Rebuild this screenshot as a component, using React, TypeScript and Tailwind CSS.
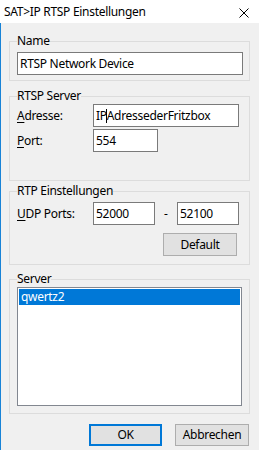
import React from "react";

function Field({ w, children, className = "" }: { w: string; children?: React.ReactNode; className?: string }) {
  return (
    <div className={`${w} h-[23px] bg-white border border-[#7a7a7a] flex items-center pl-[2px] whitespace-nowrap overflow-hidden ${className}`}>
      {children}
    </div>
  );
}

export default function App() {
  return (
    <div className="w-[259px] h-[450px] bg-[#f0f0f0] flex flex-col text-[12px] leading-[16px] tracking-[-0.3px] text-black font-['Segoe_UI','Noto_Sans',sans-serif]">
      <div className="h-[23px] bg-white flex items-center justify-between pl-[4px] pr-[10px]">
        <span>SAT&gt;IP RTSP Einstellungen</span>
        <svg width="10" height="10" viewBox="0 0 10 10" className="mt-[2px]">
          <path d="M0.5 0.5 L9.5 9.5 M9.5 0.5 L0.5 9.5" stroke="#000" strokeWidth="1" fill="none" />
        </svg>
      </div>
      <div className="flex-1 border-l border-[#1883d7] flex flex-col pl-[8px] pr-[9px]">
        <fieldset className="mt-[10px] border border-[#dcdcdc] pl-[7px] pr-[6px] pt-[3px] pb-[5px] m-0">
          <legend className="p-0">Name</legend>
          <Field w="w-[226px]">RTSP Network Device</Field>
        </fieldset>

        <fieldset className="mt-[7px] border border-[#dcdcdc] pl-[7px] pr-[6px] pt-0 pb-[28px]">
          <legend className="p-0">RTSP Server</legend>
          <div className="flex items-center h-[23px]">
            <span className="w-[76px]"><u className="underline-offset-[2px]">A</u>dresse:</span>
            <Field w="w-[146px]">
              IP<span className="inline-block w-[1px] h-[14px] bg-black -ml-[0.5px] mr-[-0.5px]" />AdressederFritzbox
            </Field>
          </div>
          <div className="flex items-center h-[23px] mt-[2px]">
            <span className="w-[76px]"><u className="underline-offset-[2px]">P</u>ort:</span>
            <Field w="w-[65px]">554</Field>
          </div>
        </fieldset>

        <fieldset className="mt-[2px] border border-[#dcdcdc] pl-[7px] pr-[6px] pt-[3px] pb-[8px]">
          <legend className="p-0">RTP Einstellungen</legend>
          <div className="flex items-center h-[23px]">
            <span className="w-[76px]"><u className="underline-offset-[2px]">U</u>DP Ports:</span>
            <Field w="w-[62px]">52000</Field>
            <span className="w-[22px] pl-[9px]">-</span>
            <Field w="w-[62px]">52100</Field>
          </div>
          <div className="flex mt-[8px] pl-[146px]">
            <div className="w-[74px] h-[23px] bg-[#e1e1e1] border border-[#adadad] flex items-center justify-center">Default</div>
          </div>
        </fieldset>

        <fieldset className="mt-[6px] border border-[#dcdcdc] pl-[7px] pr-[6px] pt-0 pb-[7px]">
          <legend className="p-0">Server</legend>
          <div className="w-[225px] h-[119px] bg-white border border-[#828790] p-[1px]">
            <div className="h-[16px] bg-[#0078d7] text-white pl-[2px] flex items-center">qwertz2</div>
          </div>
        </fieldset>

        <div className="flex justify-end gap-[13px] mt-[10px] pr-[1px]">
          <div className="w-[73px] h-[22px] bg-[#e1e1e1] border-2 border-[#0078d7] flex items-center justify-center">OK</div>
          <div className="w-[74px] h-[22px] bg-[#e1e1e1] border border-[#adadad] flex items-center justify-center">Abbrechen</div>
        </div>
      </div>
    </div>
  );
}
